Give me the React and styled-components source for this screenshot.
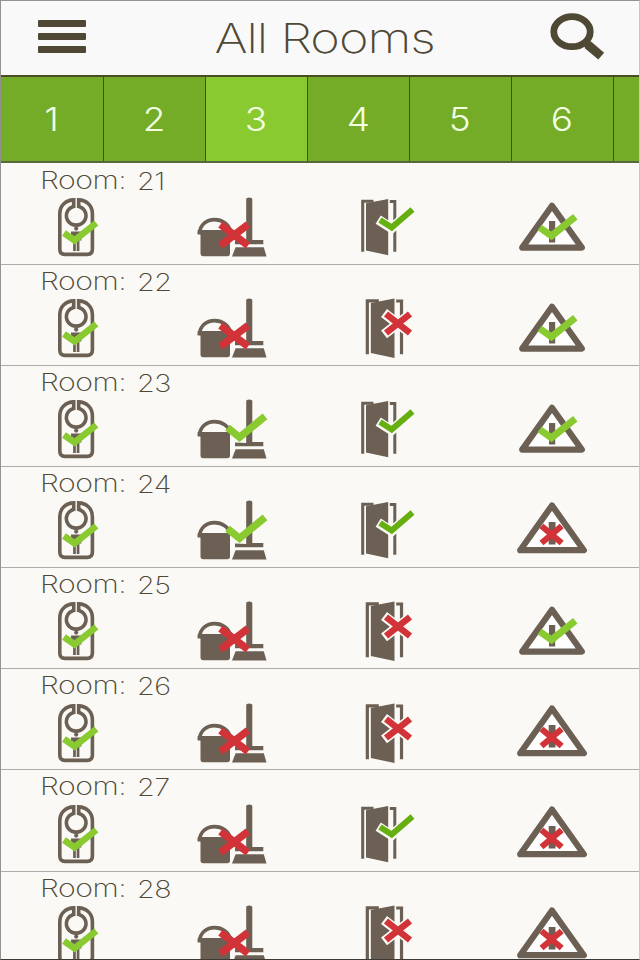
import React, { useState } from 'react';
import styled, { createGlobalStyle } from 'styled-components';

const GlobalStyle = createGlobalStyle`
  body {
    margin: 0;
    overflow: hidden;
    background: #faf9f5;
  }
`;

const Screen = styled.div`
  --dark: #4f4835;
  --green: #74ab27;
  --lime: #89ca30;

  box-sizing: border-box;
  width: 640px;
  height: 960px;
  overflow: hidden;
  display: flex;
  flex-direction: column;
  border: 1px solid #939191;
  border-right-color: #c9c8c5;
  border-bottom-color: #3d3a36;
  background: #faf9f5;
  font-family: Inter, 'Liberation Sans', sans-serif;
  font-weight: 300;
`;

const Header = styled.header`
  flex: none;
  height: 74px;
  display: flex;
  align-items: center;
  justify-content: space-between;
  padding: 0 33px 0 35px;
  background: #f9f9f9;
`;

const IconButton = styled.button`
  display: flex;
  padding: 0;
  border: none;
  background: none;
  cursor: pointer;
`;

const Title = styled.h1`
  margin: 0 0 0 11px;
  color: var(--dark);
  font-size: 41px;
  line-height: 73px;
  font-weight: 250;
  letter-spacing: -0.8px;
  white-space: nowrap;
  transform: scaleX(1.23);
`;

const Floors = styled.nav`
  flex: none;
  display: flex;
  height: 84px;
  border-top: 2px solid #494c24;
  border-bottom: 2px solid #57663d;
  overflow: hidden;
`;

const Floor = styled.button`
  flex: none;
  box-sizing: border-box;
  width: 102px;
  padding: 0;
  border: none;
  border-right: 1px solid #45501f;
  background: ${(props) => (props.$active ? 'var(--lime)' : 'var(--green)')};
  color: #f2ffe2;
  font-family: inherit;
  font-size: 33px;
  font-weight: 300;
  cursor: pointer;

  &:first-child {
    width: 102.5px;
  }
`;

const FloorNumber = styled.span`
  display: inline-block;
  transform: scaleX(1.12);
`;

const RoomList = styled.ul`
  flex: 1;
  min-height: 0;
  margin: 0;
  padding: 0.6px 0 0;
  overflow: hidden;
  list-style: none;
`;

const RoomRow = styled.li`
  box-sizing: border-box;
  height: 101.15px;
  border-bottom: 1.5px solid #adacaa;
`;

const RoomLabel = styled.div`
  display: flex;
  height: 26.3px;
  padding-left: 38.5px;
  color: var(--dark);
  font-size: 24px;
  font-weight: 250;
  letter-spacing: -0.4px;
  line-height: 34px;
`;

const LabelText = styled.span`
  width: 97.5px;
  white-space: nowrap;
  transform: scaleX(${(props) => props.$stretch});
  transform-origin: 0 0;
`;

const LabelNumber = styled(LabelText)`
  padding-top: 1px;
`;

const Statuses = styled.div`
  display: grid;
  grid-template-columns: repeat(4, 160px);
  padding-left: 29px;
`;

const StatusIcon = styled.svg`
  display: block;
  width: 90px;
  height: 70px;
`;

const MenuIcon = () => (
  <svg width="54" height="40" viewBox="0 0 54 40" fill="#4f4835">
    <rect x="2" y="1.9" width="48" height="7.2" rx="1" />
    <rect x="2" y="14.9" width="48" height="7.2" rx="1" />
    <rect x="2" y="27.9" width="48" height="7.2" rx="1" />
  </svg>
);

const SearchIcon = () => (
  <svg width="58" height="50" viewBox="0 0 58 50" fill="none" stroke="#4f4835">
    <ellipse cx="24" cy="18.7" rx="18.2" ry="15" strokeWidth="6.8" />
    <path d="M36 29 L41 33.5" strokeWidth="6.5" />
    <path d="M39.5 31.5 L53.2 43.2" strokeWidth="9" />
  </svg>
);

// Privacy sign on the door handle
const Hanger = () => (
  <StatusIcon viewBox="0 0 90 70">
    <g fill="none" stroke="#6b6053" strokeWidth="3.6">
      <path d="M43.7 18 V9.9 C36 10.2 29.8 15 29.8 24 V59 Q29.8 64.4 35 64.4 H57.2 Q62.4 64.4 62.4 59 V24 C62.4 15 56.2 10.2 48.7 9.9 V18" />
      <path d="M43.7 16.6 A9.8 9.4 0 1 0 48.7 16.6" />
    </g>
    <circle cx="46.2" cy="38.6" r="2.1" fill="#6b6053" />
    <path d="M41 41.5 H51.4 V50.5 H49.4 V61 H46.7 V52 H45.8 V61 H43.1 V50.5 H41 Z" fill="#6b6053" />
    <path d="M34 43 L44.5 50.3 L66.3 33" fill="none" stroke="#89ca30" strokeWidth="6.6" />
  </StatusIcon>
);

// Cleaning status: bucket and broom
const Cleaning = ({ ok }) => (
  <StatusIcon viewBox="0 0 90 70">
    <g fill="#6b6053">
      <path d="M9.3 44 C10 34 17 29.6 24.5 29.6 C32 29.6 39 34 40.3 41" fill="none" stroke="#6b6053" strokeWidth="3.6" />
      <path d="M7.7 40 H40 V63.5 Q40 66.3 37.2 66.3 H13.3 Q10.5 66.3 10.5 63.5 V44.5 H7.7 Z" />
      <path d="M56.2 51 V9.5 Q56.2 7.6 59.2 7.6 Q62.3 7.6 62.3 9.5 V50 H73.3 V54.2 H45 V50.5 Z" />
      <path d="M45.6 57.3 H73.8 L76.5 66.4 H42 Z" />
    </g>
    {ok ? (
      <path d="M37.5 35.7 L49.5 45.3 L75 24.3" fill="none" stroke="#89ca30" strokeWidth="7.4" />
    ) : (
      <path d="M30.5 34.5 L58 55.5 M58 34.5 L30.5 55.5" fill="none" stroke="#d23338" strokeWidth="7.4" />
    )}
  </StatusIcon>
);

const DoorShape = () => (
  <g>
    <path d="M23.5 11.3 H12.7 V61.8" fill="none" stroke="#6b6053" strokeWidth="3" />
    <path d="M39.8 11.4 H44.8 V61.8" fill="none" stroke="#6b6053" strokeWidth="3" />
    <path d="M16 13.3 L38.2 9 V65.3 L16 60.6 Z" fill="#6b6053" />
  </g>
);

const Door = ({ ok }) => (
  <StatusIcon viewBox="0 0 90 70">
    {ok ? (
      <>
        <DoorShape />
        <path d="M28.2 29.6 L41.7 38.2 L63.3 19" fill="none" stroke="#faf9f5" strokeWidth="9.6" />
        <path d="M30 30 L41.7 37.6 L62.5 19.6" fill="none" stroke="#65b010" strokeWidth="6" />
      </>
    ) : (
      <>
        <g transform="translate(3.8 -2) scale(1.065 1.055)">
          <DoorShape />
        </g>
        <path d="M34 22 L61.8 43.3 M61.8 22 L34 43.3" fill="none" stroke="#faf9f5" strokeWidth="9.8" />
        <path d="M36 23 L60 42 M60 23 L36 42" fill="none" stroke="#d23338" strokeWidth="6.6" />
      </>
    )}
  </StatusIcon>
);

// Maintenance warning
const Warning = ({ ok }) => (
  <StatusIcon viewBox="0 0 90 70">
    <path
      d={ok ? 'M42 15.8 L71.8 57.6 H12.2 Z' : 'M42 12.5 L73.8 57.2 H10.2 Z'}
      fill="#fffefe"
      stroke="#6b6053"
      strokeWidth="6.2"
      strokeLinejoin="round"
    />
    <path d={ok ? 'M39 31 H45.2 V52.5 H39 Z' : 'M38.7 29 H45.5 V51.5 H38.7 Z'} fill="#6b6053" />
    {ok ? (
      <path d="M29.6 37.5 L41.5 45.8 L65.3 26.7" fill="none" stroke="#89ca30" strokeWidth="7" />
    ) : (
      <path d="M31.5 33 L51.7 50 M51.7 33 L31.5 50" fill="none" stroke="#d23338" strokeWidth="6.2" />
    )}
  </StatusIcon>
);

const floors = [1, 2, 3, 4, 5, 6, 7];

const rooms = [
  { number: 21, clean: false, door: true, safe: true },
  { number: 22, clean: false, door: false, safe: true },
  { number: 23, clean: true, door: true, safe: true },
  { number: 24, clean: true, door: true, safe: false },
  { number: 25, clean: false, door: false, safe: true },
  { number: 26, clean: false, door: false, safe: false },
  { number: 27, clean: false, door: true, safe: false },
  { number: 28, clean: false, door: false, safe: false },
];

const App = () => {
  const [floor, setFloor] = useState(3);

  return (
    <Screen>
      <GlobalStyle />
      <Header>
        <IconButton aria-label="Menu">
          <MenuIcon />
        </IconButton>
        <Title>All Rooms</Title>
        <IconButton aria-label="Search">
          <SearchIcon />
        </IconButton>
      </Header>
      <Floors>
        {floors.map((n) => (
          <Floor key={n} $active={n === floor} onClick={() => setFloor(n)}>
            {n < 7 && <FloorNumber>{n}</FloorNumber>}
          </Floor>
        ))}
      </Floors>
      <RoomList>
        {rooms.map((room) => (
          <RoomRow key={room.number}>
            <RoomLabel>
              <LabelText $stretch={1.26}>Room:</LabelText>
              <LabelNumber $stretch={1.2}>{room.number}</LabelNumber>
            </RoomLabel>
            <Statuses>
              <Hanger />
              <Cleaning ok={room.clean} />
              <Door ok={room.door} />
              <Warning ok={room.safe} />
            </Statuses>
          </RoomRow>
        ))}
      </RoomList>
    </Screen>
  );
};

export default App;
